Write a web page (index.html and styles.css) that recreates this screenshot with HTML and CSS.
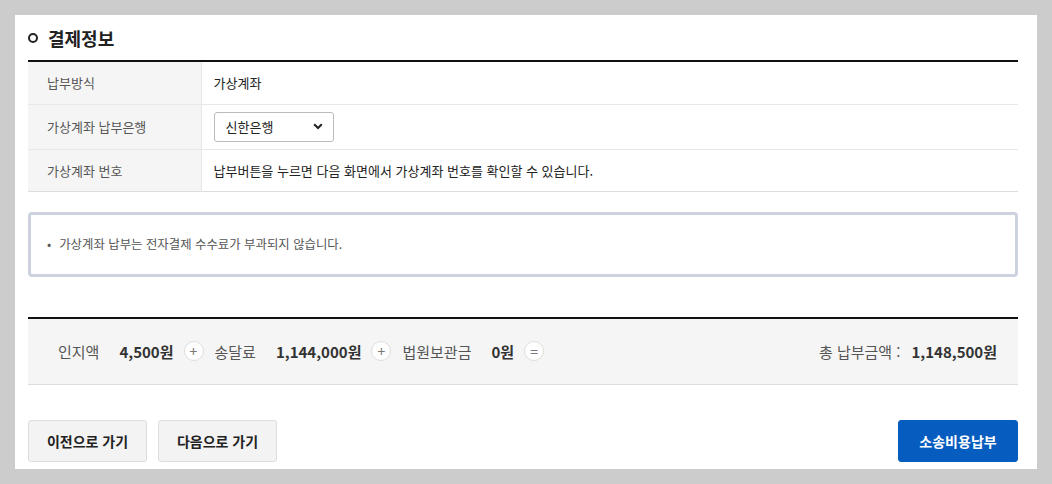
FILE: index.html
```html
<!DOCTYPE html>
<html lang="ko">
<head>
<meta charset="utf-8">
<title>결제정보</title>
<link rel="stylesheet" href="styles.css">
</head>
<body>
<div class="panel">
  <h2 class="title"><span class="dot"></span>결제정보</h2>
  <table class="info">
    <tr class="row-a">
      <th>납부방식</th>
      <td>가상계좌</td>
    </tr>
    <tr class="row-b">
      <th>가상계좌 납부은행</th>
      <td>
        <div class="select">
          <span>신한은행</span>
          <svg width="10" height="7" viewBox="0 0 10 7"><path d="M1.2 1.3 L5 5 L8.8 1.3" fill="none" stroke="#222" stroke-width="2"/></svg>
        </div>
      </td>
    </tr>
    <tr class="row-c">
      <th>가상계좌 번호</th>
      <td>납부버튼을 누르면 다음 화면에서 가상계좌 번호를 확인할 수 있습니다.</td>
    </tr>
  </table>

  <div class="notice">
    <p><span class="bullet">•</span>가상계좌 납부는 전자결제 수수료가 부과되지 않습니다.</p>
  </div>

  <div class="summary">
    <div class="items">
      <span class="lbl">인지액</span><strong class="val">4,500원</strong>
      <span class="op">+</span>
      <span class="lbl">송달료</span><strong class="val">1,144,000원</strong>
      <span class="op">+</span>
      <span class="lbl">법원보관금</span><strong class="val">0원</strong>
      <span class="op">=</span>
    </div>
    <div class="total">
      <span class="lbl">총 납부금액 :</span><strong class="val">1,148,500원</strong>
    </div>
  </div>

  <div class="actions">
    <div class="left">
      <button class="btn">이전으로 가기</button>
      <button class="btn">다음으로 가기</button>
    </div>
    <button class="btn primary">소송비용납부</button>
  </div>
</div>
</body>
</html>
```
FILE: styles.css
```css
* { box-sizing: border-box; }
html, body { margin: 0; }
body {
  background: #cccccc;
  padding: 15px;
  font-family: "Noto Sans CJK KR", "Noto Sans", sans-serif;
  color: #222;
}
.panel {
  background: #fff;
  width: 1022px;
  height: 454px;
  padding: 0 19px 0 13px;
}
.title {
  margin: 0;
  height: 45px;
  display: flex;
  align-items: center;
  padding-top: 1px;
  font-size: 18px;
  font-weight: 700;
  color: #222;
}
.dot {
  width: 10px;
  height: 10px;
  border: 2px solid #222;
  border-radius: 50%;
  margin-right: 10px;
}
.info {
  width: 100%;
  border-collapse: collapse;
  border-top: 2px solid #111;
  border-bottom: 1px solid #ddd;
  font-size: 13px;
}
.info tr { border-bottom: 1px solid #e8e8e8; }
.info tr:last-child { border-bottom: 0; }
.info th {
  width: 173px;
  background: #f5f5f5;
  border-right: 1px solid #e6e6e6;
  text-align: left;
  font-weight: 400;
  color: #555;
  padding: 0 0 0 19px;
}
.info td {
  padding: 0 0 0 12px;
  color: #222;
}
.row-a th, .row-a td { height: 43px; }
.row-b th, .row-b td { height: 45px; }
.row-c th, .row-c td { height: 42px; }
.select {
  width: 120px;
  height: 30px;
  border: 1px solid #bbb;
  border-radius: 3px;
  display: flex;
  align-items: center;
  justify-content: space-between;
  padding: 0 10px 0 11px;
  color: #222;
}
.notice {
  margin-top: 20px;
  height: 65px;
  border: 3px solid #ccd3df;
  border-radius: 4px;
  display: flex;
  align-items: center;
  padding-left: 16px;
}
.notice p {
  margin: 0;
  font-size: 12.4px;
  color: #555;
}
.bullet { margin-right: 8px; }
.summary {
  margin-top: 40px;
  border-top: 2px solid #111;
  border-bottom: 1px solid #ddd;
  background: #f5f5f5;
  height: 68px;
  display: flex;
  align-items: center;
  justify-content: space-between;
  padding: 0 21px 0 30px;
}
.items, .total { display: flex; align-items: center; }
.lbl { font-size: 15px; color: #555; }
.val { font-size: 15px; font-weight: 700; color: #333; margin-left: 20px; }
.total .val { margin-left: 11px; }
.op {
  width: 20px;
  height: 20px;
  border: 1px solid #ddd;
  border-radius: 50%;
  background: #fff;
  display: flex;
  align-items: center;
  justify-content: center;
  font-size: 14px;
  color: #777;
  margin: 0 11px 0 10px;
  line-height: 1;
}
.actions {
  margin-top: 35px;
  display: flex;
  justify-content: space-between;
}
.left { display: flex; gap: 11px; }
.btn {
  font-family: inherit;
  width: 119px;
  height: 42px;
  border: 1px solid #ddd;
  border-radius: 3px;
  background: #f3f3f3;
  font-size: 14px;
  font-weight: 700;
  color: #222;
  padding: 0;
}
.btn.primary {
  width: 120px;
  background: #065cbf;
  border-color: #065cbf;
  color: #fff;
}
```
